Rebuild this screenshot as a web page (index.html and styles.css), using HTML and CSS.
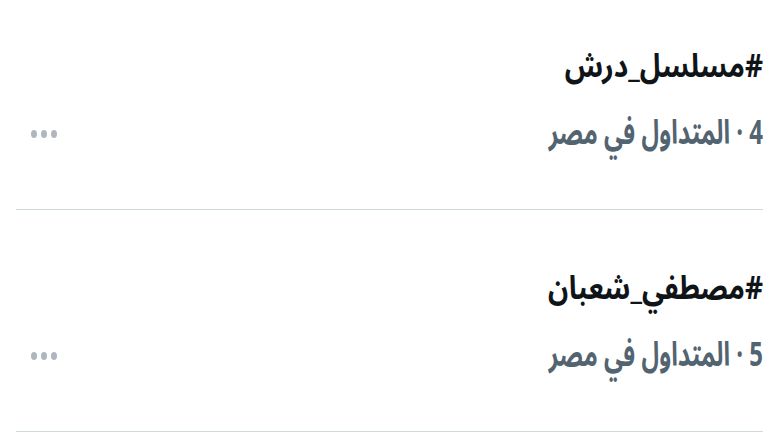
FILE: index.html
```html
<!DOCTYPE html>
<html lang="ar" dir="rtl">
<head>
  <meta charset="utf-8">
  <title>المتداول</title>
  <link rel="stylesheet" href="styles.css">
</head>
<body>
  <div class="trends">
    <div class="trend first">
      <div class="trend-text">
        <div class="tag">#مسلسل_درش</div>
        <div class="meta">4 · المتداول في مصر</div>
      </div>
      <div class="more"><span></span><span></span><span></span></div>
    </div>
    <div class="trend">
      <div class="trend-text">
        <div class="tag">#مصطفي_شعبان</div>
        <div class="meta">5 · المتداول في مصر</div>
      </div>
      <div class="more"><span></span><span></span><span></span></div>
    </div>
  </div>
</body>
</html>
```

FILE: styles.css
```css
body {
  margin: 0;
  background: #fff;
  font-family: "Noto Sans Arabic", "DejaVu Sans", sans-serif;
  overflow: hidden;
}

.trends {
  margin: 0 16px;
}

.trend {
  display: flex;
  align-items: flex-end;
  justify-content: space-between;
  padding: 58px 0 53px;
  border-bottom: 1px solid #cfd9de;
}

.trend.first {
  padding-top: 46px;
}

/* the shot is a bit tall, stretch the text to match */
.tag {
  font-size: 28px;
  font-weight: bold;
  color: #0f1419;
  line-height: 44px;
  transform: scaleY(1.15);
}

.meta {
  font-size: 24px;
  font-weight: bold;
  color: #536471;
  line-height: 44px;
  margin-top: 22px;
  transform: scaleY(1.4);
}

.more {
  display: flex;
  align-items: center;
  gap: 4px;
  height: 44px;
  margin-left: 15px;
}

.more span {
  width: 6px;
  height: 8px;
  border-radius: 50%;
  background: #aeb7bf;
}
```
